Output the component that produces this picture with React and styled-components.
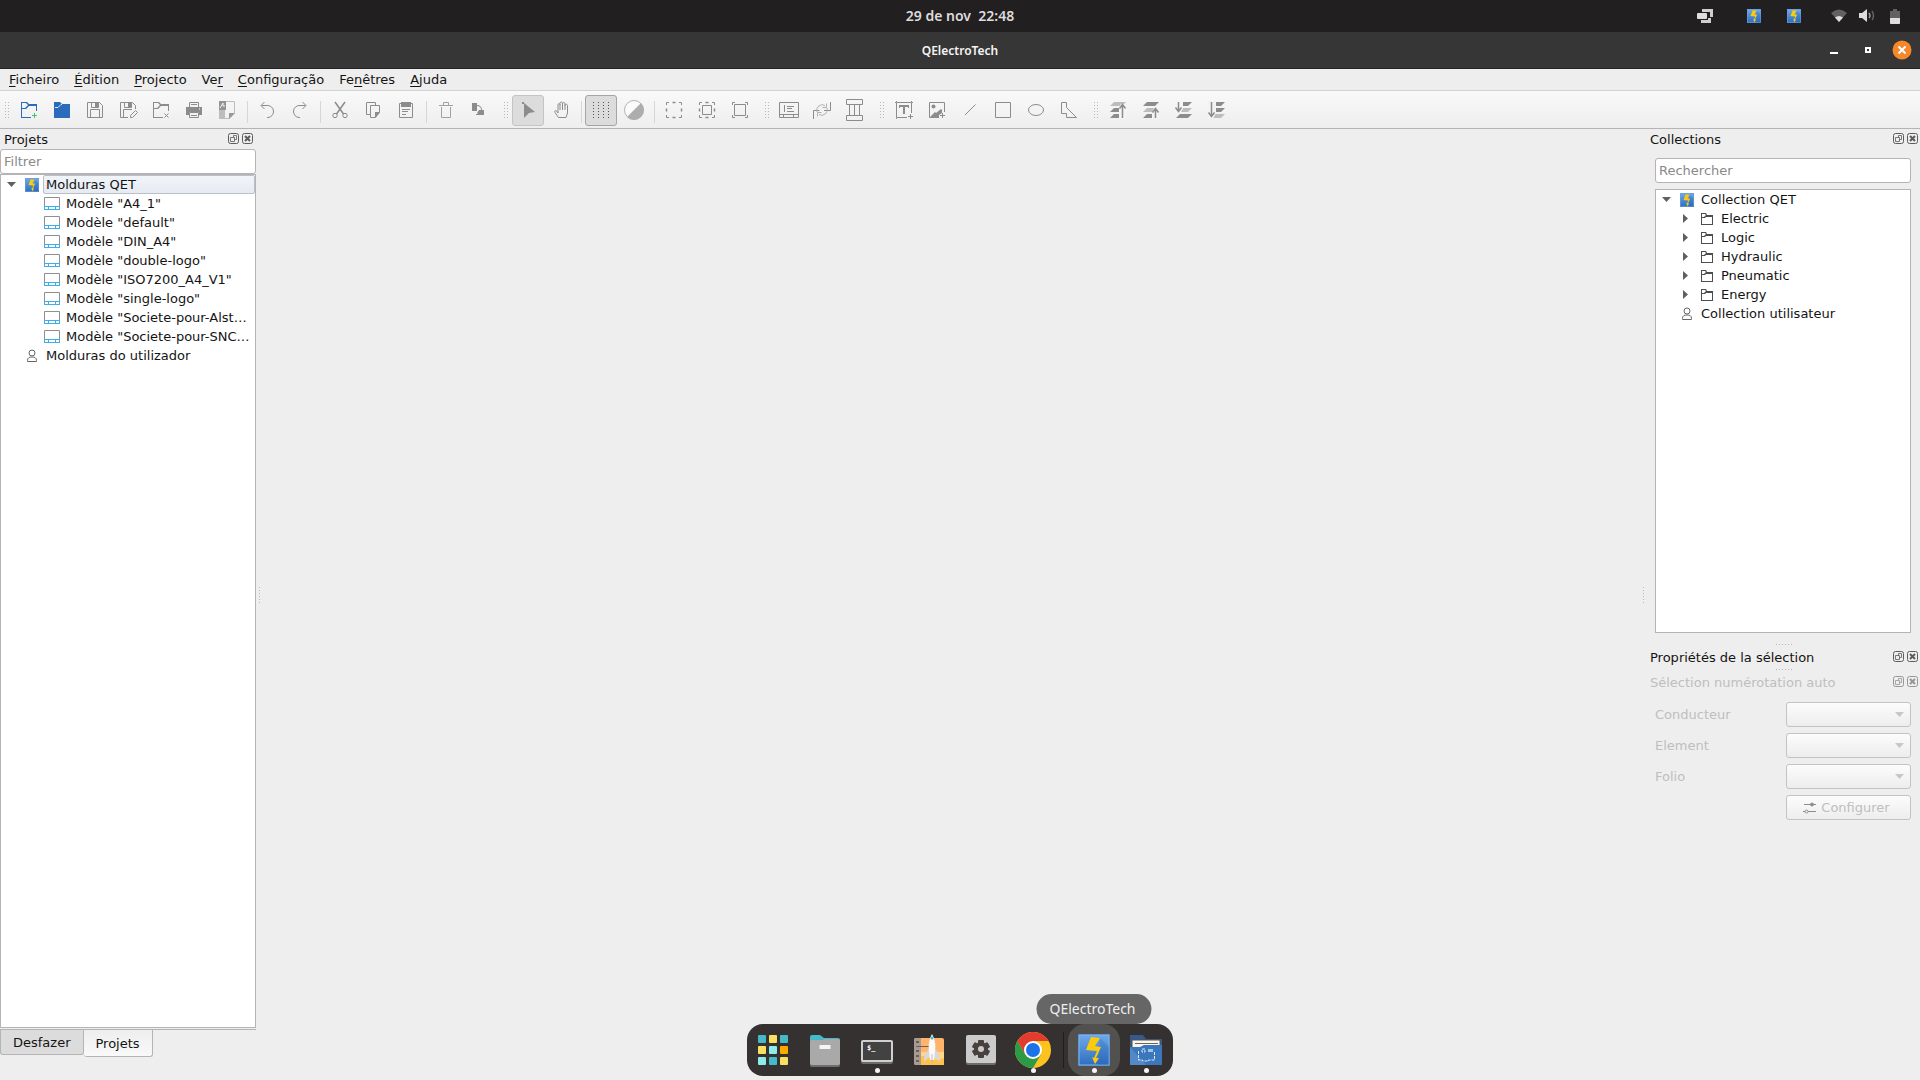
import React from "react";
import styled, { createGlobalStyle, css } from "styled-components";

const lineColor = "#b4b4b4";
const iconColor = "#8c8c8c";
const uiFont = `"DejaVu Sans", sans-serif`;
const shellFont = `"Noto Sans", sans-serif`;

const GlobalStyle = createGlobalStyle`
  * {
    box-sizing: border-box;
  }
  body {
    margin: 0;
    background: #eeeeee;
    color: #141414;
    font-family: ${uiFont};
    font-size: 13px;
    overflow: hidden;
  }
  button, input, select {
    font: inherit;
    color: inherit;
  }
`;

/* ---------- icons ---------- */

const Bolt = ({ size = 14, className }) => (
  <svg className={className} width={size} height={size} viewBox="0 0 32 32">
    <defs>
      <linearGradient id="boltSky" x1="0" y1="0" x2="0" y2="1">
        <stop offset="0" stopColor="#6ea8e8" />
        <stop offset="1" stopColor="#2f6fc0" />
      </linearGradient>
    </defs>
    <rect width="32" height="32" fill="#3f78bd" />
    <rect x="1" y="1" width="30" height="30" fill="url(#boltSky)" stroke="#83b4ea" />
    <path d="M22 4l9 9v18H20z" fill="#1f5dab" opacity=".25" />
    <path d="M13 3l9 1-5 8 6 1-5 11h3l-4 6-3-7 2 1 3-7-11-1z" fill="#fecb0b" />
  </svg>
);

const ModelIcon = () => (
  <svg width="16" height="13" viewBox="0 0 16 13" fill="none">
    <path d="M.5 9V.5h15V9" stroke="#8f8f8f" />
    <path d="M0 9.5h16M0 12.5h16M.5 9v4M15.5 9v4M4.5 10v2M11.5 10v2" stroke="#3daee9" />
  </svg>
);

const UserIcon = () => (
  <svg width="14" height="14" viewBox="0 0 14 14" fill="none" stroke="#666">
    <circle cx="7" cy="4" r="3" />
    <path d="M2.500 12.500v-1c0-3 2-3.500 4.500-3.500s4.500.5 4.500 3.500v1z" />
  </svg>
);

const FolderIcon = () => (
  <svg width="14" height="14" viewBox="1 0 14 14" fill="#4d4d4d">
    <path fillRule="evenodd" d="M1 1h5l1 2h6v10H1zM2 2v3h2l2-2-1-1zM2 6v6h10V5H6L5 6z" />
  </svg>
);

const ArrowDown = () => (
  <svg width="9" height="5" viewBox="0 0 9 5">
    <path d="M0 0h9L4.500 5z" fill="#606060" />
  </svg>
);

const ArrowRight = () => (
  <svg width="5" height="9" viewBox="0 0 5 9">
    <path d="M0 0v9l5-4.500z" fill="#606060" />
  </svg>
);

const stroke = { fill: "none", stroke: iconColor };
const LayerBar = ({ y, light }) => (
  <path d={`M3 ${y + 4}l4-4h12l-4 4z`} fill={light ? "#bdbdbd" : iconColor} />
);

const toolIcons = {
  newProject: (
    <>
      <path
        fill="#2b6cba"
        fillRule="evenodd"
        d="M3 3h6l2 2h8v7h-1V7h-7l-3 3H4v8h9v1H3zM4 4v5h3l3-3-2-2z"
      />
      <path d="M16.500 14v5M14 16.500h5" stroke="#2ecc71" />
    </>
  ),
  open: (
    <>
      <path d="M3 3h6l2 2h8v14H3z" fill="#2b6cba" />
      <path d="M4 8.500h3l3-3h1" fill="none" stroke="#dfe9f5" />
    </>
  ),
  save: (
    <>
      <path d="M3.500 3.500h12l3 3v12h-15z" {...stroke} />
      <path d="M6.500 18v-7.500h9V18M7.500 4v4.500h7V4" {...stroke} />
      <path d="M11 3h3v5h-3z" fill={iconColor} />
    </>
  ),
  saveAs: (
    <>
      <path d="M11 18.500H3.500v-15h12l3 3V10M6.500 18v-7.500H15M7.500 4v4.500h7V4" {...stroke} />
      <path d="M11 3h3v5h-3z" fill={iconColor} />
      <path d="M13.500 18.500v-2l5-5 2 2-5 5z" {...stroke} />
    </>
  ),
  close: (
    <>
      <path
        fill={iconColor}
        fillRule="evenodd"
        d="M3 3h6l2 2h8v7h-1V7h-7l-3 3H4v8h9v1H3zM4 4v5h3l3-3-2-2z"
      />
      <path d="M14.500 14.500l4 4M18.500 14.500l-4 4" {...stroke} />
    </>
  ),
  print: (
    <>
      <path d="M6.500 8V3.500h9V8M8 5.500h6M6.500 13.500h9v5h-9zM8 16.500h6" {...stroke} />
      <path d="M3 8h16v8h-3v-3H6v3H3z" fill={iconColor} />
      <path d="M16 10h1" stroke="#fff" />
    </>
  ),
  exportPdf: (
    <>
      <path d="M3 2h6v18H3z" fill="#bdbdbd" />
      <path d="M3 2h7v9H3z" fill="#949494" />
      <path d="M4 9l3-5v3h2" stroke="#f2f2f2" fill="none" />
      <path d="M10 2.500h8.500V14l-5 5.500H4" fill="none" stroke="#bdbdbd" />
      <path d="M13 14h6l-6 6z" fill="#999" />
    </>
  ),
  undo: <path d="M5.500 6.500h5.500a6 6 0 0 1 1 12h-1M8.500 3l-3.500 3.500 3.500 3.500" {...stroke} />,
  redo: <path d="M16.500 6.500h-5.500a6 6 0 0 0-1 12h1M13.500 3l3.500 3.500-3.500 3.500" {...stroke} />,
  cut: (
    <>
      <path d="M6 3l8.500 12M16 3L7.500 15" {...stroke} strokeWidth="1.500" />
      <circle cx="6" cy="16.500" r="2.200" {...stroke} />
      <circle cx="16" cy="16.500" r="2.200" {...stroke} />
    </>
  ),
  copy: (
    <>
      <path d="M8 15.500H4.500v-12h9V6" {...stroke} />
      <path d="M8.500 6.500h9v7l-4 5h-5z" {...stroke} />
      <path d="M13 13h5l-5 6z" fill={iconColor} />
    </>
  ),
  paste: (
    <>
      <path d="M4.500 4.500h13v14h-13z" {...stroke} />
      <path d="M6 3h10v5H6z" fill={iconColor} />
      <path d="M7 10.500h8M7 12.500h6M7 15.500h4" {...stroke} />
    </>
  ),
  trash: (
    <path d="M4 6.500h14M8.500 6V3.500h5V6M6.500 8v10.500h9V8" fill="none" stroke="#a2a2a2" />
  ),
  turn: (
    <>
      <path d="M4 4h5v8H4zM8 15h2l-1-1 2-3h5v5H8z" fill={iconColor} />
      <path d="M9 6.500c3 0 4.500 1.500 4.500 5" {...stroke} />
    </>
  ),
  select: (
    <>
      <path d="M7 4l11 9-6 1-5 5z" fill={iconColor} />
      <path d="M5 3h2v2H5z" fill={iconColor} />
    </>
  ),
  hand: (
    <path
      d="M8.500 18.500L5 13.500c-1-2 1-2.500 2-1l1 1.500V6c0-2 2-2 2 0V4.500c0-2 2.500-2 2.500 0V5c0-2 2.500-2 2.500 0v1.500c0-2 2.500-1.500 2.500 0V14l-1.500 4.500zM10 6v5M12.500 5v6M15 6v5"
      {...stroke}
    />
  ),
  grid: (
    <path
      d="M3.500 3v16M8.500 3v16M13.500 3v16M18.500 3v16"
      fill="none"
      stroke="#555"
      strokeDasharray="1 2"
    />
  ),
  contrast: (
    <>
      <circle cx="11" cy="11" r="9.500" fill="#fbfbfb" stroke="#b4b4b4" />
      <path d="M18 4A9.800 9.800 0 0 1 4 18z" fill="#adadad" />
    </>
  ),
  selectAll: (
    <>
      <path d="M6 3.500H3.500V6M16 3.500h2.500V6M6 18.500H3.500V16M16 18.500h2.500V16" {...stroke} />
      <path d="M9.500 3.500h3M9.500 18.500h3M3.500 9.500v3M18.500 9.500v3" {...stroke} strokeWidth="1.500" />
    </>
  ),
  selectNone: (
    <>
      <path d="M6 3.500H3.500V6M16 3.500h2.500V6M6 18.500H3.500V16M16 18.500h2.500V16" {...stroke} />
      <path d="M9.500 3.500h3M9.500 18.500h3M3.500 9.500v3M18.500 9.500v3" {...stroke} strokeWidth="1.500" />
      <path d="M6.500 6.500h9v9h-9z" {...stroke} />
    </>
  ),
  selectInvert: (
    <>
      <path d="M6 3.500H3.500V6M16 3.500h2.500V6M6 18.500H3.500V16M16 18.500h2.500V16" {...stroke} />
      <path d="M5.500 5.500h11v11h-11z" {...stroke} />
    </>
  ),
  folio: (
    <>
      <path d="M1.500 3.500h19v15h-19zM1 15.500h20M5.500 16v2M15.500 16v2" {...stroke} />
      <path d="M6.500 6v7M9 7.500h7M9 9.500h5M9 12.500h7" {...stroke} />
    </>
  ),
  conductor: (
    <>
      <path d="M2.500 20v-8.500h6M13 11.500h6.500V3" {...stroke} />
      <path
        d="M6 13a5.500 5.500 0 0 1 8-6.500M16 9a5.500 5.500 0 0 1-8 6.500M15.500 4.500v4h-4M6.500 17.500v-4h4"
        fill="none"
        stroke="#b0b0b0"
      />
    </>
  ),
  columns: (
    <>
      <path d="M2.500.500h16v5h-16zM2.500 16.500h16v5h-16zM5.500 6v10M10.500 6v10M15.500 6v10" {...stroke} />
    </>
  ),
  text: (
    <>
      <path d="M14 18.500H3.500v-15h15V14M2 3.500h1M3.500 2v1M3.500 19v1M18.500 2v1M19 3.500h1" {...stroke} />
      <path d="M6 6h10v3h-1V8h-3v7h-2V8H7v1H6z" fill={iconColor} />
      <path d="M17.500 15v5M15 17.500h5" {...stroke} />
    </>
  ),
  image: (
    <>
      <path d="M13 18.500H3.500v-15h15V13" {...stroke} />
      <circle cx="7.500" cy="7.500" r="2" fill={iconColor} />
      <path d="M4 18l5-5 1 1 5-4 1 1v3l-3 2v2z" fill={iconColor} />
      <path d="M16.500 14v5M14 16.500h5" {...stroke} />
    </>
  ),
  line: <path d="M6 16L16.500 5.500" {...stroke} />,
  rect: <path d="M3.500 3.500h15v15h-15z" {...stroke} />,
  ellipse: <ellipse cx="11" cy="11" rx="7.500" ry="5.500" {...stroke} />,
  polygon: <path d="M3.500 3.500h5v5l10 10h-10v-4h-5z" {...stroke} />,
  raiseTop: (
    <>
      <LayerBar y={3} light />
      <LayerBar y={9} />
      <LayerBar y={15} />
      <path d="M12 8l2-3h5v15h-7z" fill="#f5f5f5" />
      <path d="M15.500 19V6M12.500 9.500l3-4 3 4" {...stroke} strokeWidth="1.500" />
    </>
  ),
  raise: (
    <>
      <LayerBar y={3} />
      <LayerBar y={9} light />
      <LayerBar y={15} />
      <path d="M12 13l2-4h5v11h-7z" fill="#f3f3f3" />
      <path d="M15.500 19v-8M12.500 13.500l3-4 3 4" {...stroke} strokeWidth="1.500" />
    </>
  ),
  lower: (
    <>
      <LayerBar y={3} />
      <LayerBar y={9} light />
      <LayerBar y={15} />
      <path d="M2 2h8v8l-3 4H2z" fill="#f5f5f5" />
      <path d="M5.500 3v8M2.500 8.500l3 4 3-4" {...stroke} strokeWidth="1.500" />
    </>
  ),
  lowerBottom: (
    <>
      <LayerBar y={3} />
      <LayerBar y={9} />
      <LayerBar y={15} light />
      <path d="M2 2h8v12l-3 6H2z" fill="#f3f3f3" />
      <path d="M5.500 3v13M2.500 13.500l3 4 3-4" {...stroke} strokeWidth="1.500" />
    </>
  ),
};

/* ---------- desktop shell ---------- */

const Screen = styled.div`
  height: 100vh;
  display: flex;
  flex-direction: column;
  position: relative;
`;
const TopBar = styled.header`
  height: 32px;
  flex: none;
  display: grid;
  grid-template-columns: 1fr auto 1fr;
  align-items: center;
  background: #221f20;
  color: #dedcdc;
  font: 600 14px ${shellFont};
`;
const Clock = styled.time`
  grid-column: 2;
  padding-bottom: 2px;
  white-space: pre;
`;
const Tray = styled.div`
  display: flex;
  align-items: center;
  justify-content: flex-end;
  padding-right: 19px;
`;
const TrayIcon = styled.svg`
  margin-left: ${(p) => p.$gap || 12}px;
`;
const TrayBolt = styled(Bolt)`
  margin-left: ${(p) => p.$gap}px;
`;
const TitleBar = styled.div`
  height: 37px;
  flex: none;
  display: grid;
  grid-template-columns: 1fr auto 1fr;
  align-items: center;
  background: #363636;
  border-bottom: 1px solid #222;
  color: #f4f4f4;
`;
const WindowTitle = styled.h1`
  grid-column: 2;
  margin: 0;
  font: 600 12px ${shellFont};
`;
const WindowButtons = styled.div`
  display: flex;
  justify-content: flex-end;
  padding-right: 8px;
  gap: 14px;
`;
const WindowButton = styled.button`
  width: 20px;
  height: 20px;
  padding: 0;
  border: 0;
  background: none;
  svg {
    display: block;
  }
`;

/* ---------- menus and toolbar ---------- */

const MenuBar = styled.nav`
  display: flex;
  flex: none;
  height: 22px;
  padding-left: 2px;
  border-bottom: 1px solid #d2d2d2;
`;
const MenuItem = styled.button`
  border: 0;
  background: none;
  padding: 0 8px 0 7px;
  line-height: 20px;
  u {
    text-underline-offset: 2px;
  }
`;
const ToolBar = styled.div`
  display: flex;
  flex: none;
  gap: 1px;
  height: 38px;
  padding-top: 4px;
  border-bottom: 1px solid ${lineColor};
  background: linear-gradient(#f9f9f9, #eeeeee);
`;
const ToolButton = styled.button`
  width: 32px;
  height: 31px;
  padding: 3px 4px 4px;
  border: 1px solid ${(p) => (p.$on ? p.$edge : "transparent")};
  border-radius: 3px;
  background: ${(p) => (p.$on ? "#dcdcdc" : "none")};
  svg {
    display: block;
    width: 22px;
    height: 22px;
  }
`;
const Separator = styled.span`
  width: 6px;
  margin: 6px 0 5px;
  background: linear-gradient(#d6d6d6, #d6d6d6) 3px 0 / 1px 100% no-repeat;
`;
const Grip = styled.span`
  width: ${(p) => (p.$first ? 12 : 15)}px;
  height: 18px;
  margin-top: 7px;
  padding: 0 3px 0 ${(p) => (p.$first ? 5 : 8)}px;
  background: conic-gradient(at 1px 1px, transparent 270deg, #b9b9b9 0) 0 0 / 3px 3px content-box
    content-box;
`;

/* ---------- docks ---------- */

const Workspace = styled.main`
  flex: 1;
  min-height: 0;
  display: flex;
`;
const LeftDock = styled.section`
  width: 256px;
  display: flex;
  flex-direction: column;
  padding-bottom: 23px;
`;
const Canvas = styled.div`
  flex: 1;
  display: flex;
  justify-content: space-between;
  align-items: center;
  padding: 0 0 18px 3px;
`;
const Handle = styled.span`
  width: ${(p) => (p.$flat ? 17 : 1)}px;
  height: ${(p) => (p.$flat ? 1 : 17)}px;
  flex: none;
  background: repeating-linear-gradient(
    ${(p) => (p.$flat ? "90deg" : "180deg")},
    #b9b9b9 0 1px,
    transparent 1px 3px
  );
`;
const HandleRow = styled.div`
  display: flex;
  justify-content: center;
  padding: ${(p) => (p.$top ? 3 : 0)}px 0 0 4px;
`;
const RightDock = styled.section`
  width: 276px;
  display: flex;
  flex-direction: column;
`;
const Pane = styled.section`
  flex: ${(p) => p.$grow} 1 0;
  min-height: 0;
  display: flex;
  flex-direction: column;
`;
const DockTitle = styled.div`
  display: flex;
  flex: none;
  align-items: center;
  gap: 2px;
  height: ${(p) => p.$h || 20}px;
  padding: 0 ${(p) => (p.$left ? 1 : 2)}px 0 ${(p) => p.$left || 4}px;
  color: ${(p) => (p.$off ? "#bebebe" : "inherit")};
  h2 {
    flex: 1;
    margin: 0;
    font: inherit;
  }
`;
const DockButton = styled.button`
  width: 12px;
  height: 12px;
  padding: 0;
  border: 0;
  background: none;
  opacity: ${(p) => (p.disabled ? 0.6 : 1)};
  svg {
    display: block;
  }
`;
const Field = styled.input`
  flex: none;
  height: 25px;
  padding: 0 3px;
  border: 1px solid ${lineColor};
  border-radius: 3px;
  background: #fff;
  margin: ${(p) => p.$margin || 0};
  &::placeholder {
    color: #898989;
  }
`;
const Tree = styled.ul`
  flex: 1;
  min-height: 0;
  list-style: none;
  background: #fff;
  border: 1px solid ${lineColor};
  margin: ${(p) => p.$margin || 0};
  padding: 0;
`;
const Row = styled.li`
  display: flex;
  align-items: center;
  height: 19px;
  padding-left: ${(p) => p.$indent}px;
`;
const Twist = styled.span`
  width: 18px;
  display: flex;
`;
const Label = styled.span`
  flex: 1;
  line-height: 19px;
  padding-left: 3px;
  margin-left: ${(p) => p.$gap || 3}px;
  white-space: nowrap;
  ${(p) =>
    p.$selected &&
    css`
      line-height: 17px;
      padding-left: 2px;
      border: 1px solid #b9c0c9;
      border-radius: 2px;
      background: linear-gradient(#f1f5fa, #e6ebf1);
    `}
`;
const Tabs = styled.div`
  display: flex;
  align-items: flex-start;
  margin-top: 1px;
  border-top: 1px solid ${lineColor};
`;
const Tab = styled.button`
  height: ${(p) => (p.$active ? 27 : 25)}px;
  padding: 1px 12px 0;
  border: 1px solid ${lineColor};
  border-top: 0;
  border-left-width: ${(p) => (p.$active ? 0 : 1)}px;
  border-radius: 0 0 3px 3px;
  background: ${(p) => (p.$active ? "linear-gradient(#eeeeee, #f9f9f9)" : "#dcdcdc")};
`;
const Form = styled.form`
  display: grid;
  grid-template-columns: 1fr 125px;
  gap: 6px 0;
  align-items: center;
  padding: 8px 9px 0 11px;
  color: #bebebe;
`;
const Combo = styled.div`
  display: grid;
  align-items: center;
  > * {
    grid-area: 1 / 1;
  }
  svg {
    justify-self: end;
    margin-right: 7px;
    pointer-events: none;
    opacity: 0.3;
  }
`;
const raised = css`
  height: 25px;
  border: 1px solid #c3c3c3;
  border-radius: 3px;
  background: linear-gradient(#fcfcfc, #ededed);
`;
const Select = styled.select`
  ${raised}
  appearance: none;
  opacity: 1;
`;
const ConfigButton = styled.button`
  ${raised}
  grid-column: 2;
  display: flex;
  align-items: center;
  justify-content: center;
  gap: 4px;
  padding: 0 4px 0 0;
  color: #bebebe;
`;

/* ---------- launcher ---------- */

const Launcher = styled.nav`
  position: absolute;
  bottom: 4px;
  left: 50%;
  transform: translateX(-50%);
  display: flex;
  align-items: center;
  height: 52px;
  padding-right: 1px;
  border-radius: 16px;
  background: #353130;
`;
const LauncherItem = styled.button`
  position: relative;
  width: 52px;
  height: 52px;
  padding: 8px;
  border: 0;
  border-radius: 17px;
  background: ${(p) => (p.$hover ? "#535150" : "none")};
  svg {
    display: block;
  }
  &::after {
    content: "";
    display: ${(p) => (p.$running ? "block" : "none")};
    position: absolute;
    left: 24px;
    bottom: 3px;
    width: 5px;
    height: 5px;
    border-radius: 50%;
    background: #f5f5f5;
  }
`;
const LauncherLine = styled.span`
  width: 1px;
  height: 36px;
  margin: 0 4px;
  background: #201d1c;
`;
const Tooltip = styled.span`
  position: absolute;
  left: 50%;
  bottom: 52px;
  transform: translateX(-50%);
  height: 30px;
  padding: 0 16px 0 13px;
  border-radius: 15px;
  background: #666;
  color: #efefef;
  font: 14px/29px ${shellFont};
`;

const menus = [
  ["", "F", "icheiro"],
  ["", "É", "dition"],
  ["", "P", "rojecto"],
  ["Ve", "r", ""],
  ["", "C", "onfiguração"],
  ["Fe", "n", "êtres"],
  ["", "A", "juda"],
];

const tools = [
  "newProject", "open", "save", "saveAs", "close", "print", "exportPdf", "|",
  "undo", "redo", "|",
  "cut", "copy", "paste", "|",
  "trash", "turn", ":",
  "select", "hand", "|",
  "grid", "contrast", "|",
  "selectAll", "selectNone", "selectInvert", ":",
  "folio", "conductor", "columns", ":",
  "text", "image", "line", "rect", "ellipse", "polygon", ":",
  "raiseTop", "raise", "lower", "lowerBottom",
];

const models = [
  'Modèle "A4_1"',
  'Modèle "default"',
  'Modèle "DIN_A4"',
  'Modèle "double-logo"',
  'Modèle "ISO7200_A4_V1"',
  'Modèle "single-logo"',
  'Modèle "Societe-pour-Alst…',
  'Modèle "Societe-pour-SNC…',
];

const collections = ["Electric", "Logic", "Hydraulic", "Pneumatic", "Energy"];

const squares = ["#46b9c8", "#f9e062", "#46b9c8", "#f9e062", "#8eebec", "#ffa800", "#8eebec", "#46b9c8", "#f9e062"];

const launcherIcons = {
  apps: squares.map((fill, i) => (
    <rect key={i} x={3 + (i % 3) * 11} y={3 + Math.floor(i / 3) * 11} width="8" height="8" rx="1" fill={fill} />
  )),
  files: (
    <>
      <path d="M3 12V5q0-2 2-2h8l4 3h14q2 0 2 2v4z" fill="#46b9c8" />
      <rect x="3" y="9" width="30" height="26" rx="2" fill="#6f6f6f" />
      <path d="M3 10q0-2 2-2h10l3-1h13q2 0 2 2v22q0 2-2 2H5q-2 0-2-2z" fill="#a9a9a9" />
      <rect x="12.500" y="13" width="11" height="4" rx=".5" fill="#f5f5f5" />
    </>
  ),
  terminal: (
    <>
      <rect x="2" y="10" width="32" height="22" rx="2" fill="#6b6b6b" />
      <rect x="2" y="8" width="32" height="22" rx="2" fill="#d0d0d0" />
      <rect x="4" y="10" width="28" height="18" fill="#424242" />
      <text x="8" y="18" fontSize="7" fontWeight="bold" fill="#fff" fontFamily="DejaVu Sans Mono">
        $_
      </text>
    </>
  ),
  rocket: (
    <>
      <rect x="3" y="6" width="30" height="27" rx="2" fill="#ffb36b" />
      <path d="M10 20h23v13H10z" fill="#ffd58a" />
      <path d="M10 24h8l7 4 8-2v7H10z" fill="#ffc34d" />
      <path d="M3 8q0-2 2-2h5v27H5q-2 0-2-2z" fill="#a79b93" />
      <path d="M5 9h3v2H5zM5 14h13v1H5zM5 18h3v2H5zM5 23h3v2H5zM5 28h3v2H5z" fill="#6c5f59" />
      <path d="M18 17c-4 4-5 8-5 13l4-4h8l4 4c0-5-1-9-5-13z" fill="#d8d8d8" />
      <path d="M21 2c3 5 4 11 3 17l-1 9h-4l-1-9c-1-6 0-12 3-17z" fill="#fafafa" />
      <circle cx="21" cy="6" r="1.500" fill="#46b9c8" />
      <path d="M20.500 22h1v9h-1z" fill="#bbb" />
    </>
  ),
  settings: (
    <>
      <rect x="3" y="4" width="30" height="29" rx="2" fill="#6c6c6c" />
      <rect x="3" y="3" width="30" height="28" rx="2" fill="#cbcbcb" />
      {[0, 60, 120].map((angle) => (
        <rect key={angle} x="15" y="8" width="6" height="18" rx="1" fill="#48403c" transform={`rotate(${angle} 18 17)`} />
      ))}
      <circle cx="18" cy="17" r="5" fill="#cbcbcb" stroke="#48403c" strokeWidth="4" />
    </>
  ),
  chrome: (
    <>
      <circle cx="18" cy="18" r="18" fill="#fcc31e" />
      <path d="M2.400 9A18 18 0 0 1 33.600 9H18L10.200 22.500z" fill="#e33b2e" />
      <path d="M2.400 9A18 18 0 0 0 18 36l7.800-13.500H10.200z" fill="#2d9a47" />
      <circle cx="18" cy="18" r="9" fill="#fff" />
      <circle cx="18" cy="18" r="7" fill="#1a73e8" />
    </>
  ),
  qet: (
    <g transform="translate(2 2)">
      <Bolt size={32} />
    </g>
  ),
  projects: (
    <>
      <path d="M2 3h13l3 4h16v26H2z" fill="#34598d" />
      <path d="M4 8h28v12H4z" fill="#f7f7f2" stroke="#5d5142" />
      <path d="M7 11.500h23" stroke="#6d6253" />
      <path d="M2 15h10l4-2h18v20H2z" fill="#3a77bd" />
      <path d="M2 15l16 18H2z" fill="#5389c8" />
      <path d="M10.500 19v9h4v1h6v-1h6v-9M14 17h3v3h-3z" fill="none" stroke="#d7e7f8" strokeDasharray="3 1" />
      <path d="M20 17h5v3h-5z" fill="#9fc1e6" />
    </>
  ),
};

const launcherItems = [
  { id: "apps", name: "Aplicações" },
  { id: "files", name: "Ficheiros" },
  { id: "terminal", name: "Terminal", running: true },
  { id: "rocket", name: "Loja" },
  { id: "settings", name: "Configurações" },
  { id: "chrome", name: "Chrome", running: true },
  { id: "qet", name: "QElectroTech", running: true, hover: true },
  { id: "projects", name: "Pasta", running: true },
];

const DockHeader = ({ title, ...rest }) => (
  <DockTitle {...rest}>
    <h2>{title}</h2>
    <DockButton aria-label={`Destacar ${title}`} disabled={rest.$off}>
      <svg width="12" height="12" viewBox="0 0 12 12" fill="none" stroke="#5c5c5c">
        <rect x=".5" y=".5" width="10" height="10" rx="2" />
        <path d="M5.500 4.500v-2h3v4h-2M2.500 4.500h4v4h-4z" strokeWidth=".8" />
      </svg>
    </DockButton>
    <DockButton aria-label={`Fechar ${title}`} disabled={rest.$off}>
      <svg width="12" height="12" viewBox="0 0 12 12" fill="none" stroke="#5c5c5c">
        <rect x=".5" y=".5" width="10" height="10" rx="2" />
        <path d="M3 3l5 5M8 3L3 8" strokeWidth="2" />
      </svg>
    </DockButton>
  </DockTitle>
);

const Tool = ({ name }) => {
  if (name === "|") return <Separator />;
  if (name === ":") return <Grip />;
  return (
    <ToolButton
      aria-label={name}
      $on={name === "select" || name === "grid"}
      $edge={name === "select" ? "#c4c4c4" : "#a5a5a5"}
    >
      <svg viewBox="0 0 22 22">{toolIcons[name]}</svg>
    </ToolButton>
  );
};

const App = () => {
  return (
    <Screen>
      <GlobalStyle />
      <TopBar>
        <Clock>29 de nov  22:48</Clock>
        <Tray>
          <TrayIcon width="16" height="14" viewBox="0 0 16 14">
            <path d="M5 0h11v8h-3V3H5zM11 9h3v5H4v-3h7z" fill="#cfcfcf" />
            <rect y="4" width="10" height="6" rx="1" fill="#dedede" />
          </TrayIcon>
          <TrayBolt $gap={34} />
          <TrayBolt $gap={26} />
          <TrayIcon $gap={30} width="16" height="14" viewBox="0 0 16 14">
            <path d="M0 4q8-7 16 0l-8 9z" fill="#626262" />
            <path d="M4 8.500q4-3 8 0L8 13z" fill="#dedede" />
          </TrayIcon>
          <TrayIcon width="16" height="14" viewBox="0 0 16 14">
            <path d="M0 4h3l5-4v13L3 9H0z" fill="#dedede" />
            <path d="M10 4q2 3 0 5" fill="none" stroke="#9a9a9a" strokeWidth="1.500" />
            <path d="M13 2q3 5 0 9" fill="none" stroke="#626262" strokeWidth="1.500" />
          </TrayIcon>
          <TrayIcon $gap={14} width="12" height="15" viewBox="0 0 12 15">
            <path d="M4 0h4v2h3v12q0 1-1 1H2q-1 0-1-1V2h3z" fill="#626262" />
            <path d="M1 9h10v5q0 1-1 1H2q-1 0-1-1z" fill="#dedede" />
          </TrayIcon>
        </Tray>
      </TopBar>
      <TitleBar>
        <WindowTitle>QElectroTech</WindowTitle>
        <WindowButtons>
          <WindowButton aria-label="Minimizar">
            <svg width="20" height="20" viewBox="0 0 20 20">
              <path d="M6 12h8v2H6z" fill="#fff" />
            </svg>
          </WindowButton>
          <WindowButton aria-label="Maximizar">
            <svg width="20" height="20" viewBox="0 0 20 20">
              <path d="M8 8h4v4H8z" fill="none" stroke="#fff" strokeWidth="2" />
            </svg>
          </WindowButton>
          <WindowButton aria-label="Fechar">
            <svg width="20" height="20" viewBox="0 0 20 20">
              <circle cx="10" cy="10" r="9.500" fill="#f4882b" />
              <path d="M6.500 6.500l7 7M13.500 6.500l-7 7" stroke="#fff" strokeWidth="2" />
            </svg>
          </WindowButton>
        </WindowButtons>
      </TitleBar>
      <MenuBar>
        {menus.map(([before, key, after]) => (
          <MenuItem key={before + key + after}>
            {before}
            <u>{key}</u>
            {after}
          </MenuItem>
        ))}
      </MenuBar>
      <ToolBar>
        <Grip $first />
        {tools.map((name, i) => (
          <Tool key={i} name={name} />
        ))}
      </ToolBar>
      <Workspace>
        <LeftDock>
          <DockHeader title="Projets" />
          <Field placeholder="Filtrer" aria-label="Filtrer" />
          <Tree>
            <Row $indent={6}>
              <Twist><ArrowDown /></Twist>
              <Bolt />
              <Label $gap={4} $selected>Molduras QET</Label>
            </Row>
            {models.map((name) => (
              <Row key={name} $indent={43}>
                <ModelIcon />
                <Label>{name}</Label>
              </Row>
            ))}
            <Row $indent={24}>
              <UserIcon />
              <Label $gap={4}>Molduras do utilizador</Label>
            </Row>
          </Tree>
          <Tabs>
            <Tab>Desfazer</Tab>
            <Tab $active>Projets</Tab>
          </Tabs>
        </LeftDock>
        <Canvas>
          <Handle />
          <Handle />
        </Canvas>
        <RightDock>
          <Pane $grow={7}>
            <DockHeader title="Collections" $left={6} />
            <Field $margin="9px 9px 6px 11px" placeholder="Rechercher" aria-label="Rechercher" />
            <Tree $margin="0 9px 8px 11px">
              <Row $indent={6}>
                <Twist><ArrowDown /></Twist>
                <Bolt />
                <Label $gap={4}>Collection QET</Label>
              </Row>
              {collections.map((name) => (
                <Row key={name} $indent={27}>
                  <Twist><ArrowRight /></Twist>
                  <FolderIcon />
                  <Label>{name}</Label>
                </Row>
              ))}
              <Row $indent={24}>
                <UserIcon />
                <Label $gap={4}>Collection utilisateur</Label>
              </Row>
            </Tree>
          </Pane>
          <Pane $grow={6}>
            <HandleRow $top>
              <Handle $flat />
            </HandleRow>
            <DockHeader title="Propriétés de la sélection" $left={6} $h={24} />
            <HandleRow>
              <Handle $flat />
            </HandleRow>
            <DockHeader title="Sélection numérotation auto" $left={6} $h={24} $off />
            <Form>
              {["Conducteur", "Element", "Folio"].map((name) => (
                <React.Fragment key={name}>
                  <label htmlFor={name}>{name}</label>
                  <Combo>
                    <Select id={name} disabled />
                    <ArrowDown />
                  </Combo>
                </React.Fragment>
              ))}
              <ConfigButton type="button" disabled>
                <svg width="14" height="12" viewBox="0 0 14 12" fill="none" stroke="#8c8c8c">
                  <path d="M1 2.500h12M5 9.500h8M0 9.500h2" />
                  <circle cx="9" cy="2.500" r="1.500" fill="#8c8c8c" />
                  <circle cx="3.500" cy="9.500" r="1.500" />
                </svg>
                Configurer
              </ConfigButton>
            </Form>
          </Pane>
        </RightDock>
      </Workspace>
      <Launcher>
        {launcherItems.map(({ id, name, running, hover }) => (
          <React.Fragment key={id}>
            {id === "qet" && <LauncherLine />}
            <LauncherItem aria-label={name} $running={running} $hover={hover}>
              <svg width="36" height="36" viewBox="0 0 36 36">{launcherIcons[id]}</svg>
              {hover && <Tooltip>{name}</Tooltip>}
            </LauncherItem>
          </React.Fragment>
        ))}
      </Launcher>
    </Screen>
  );
};

export default App;
